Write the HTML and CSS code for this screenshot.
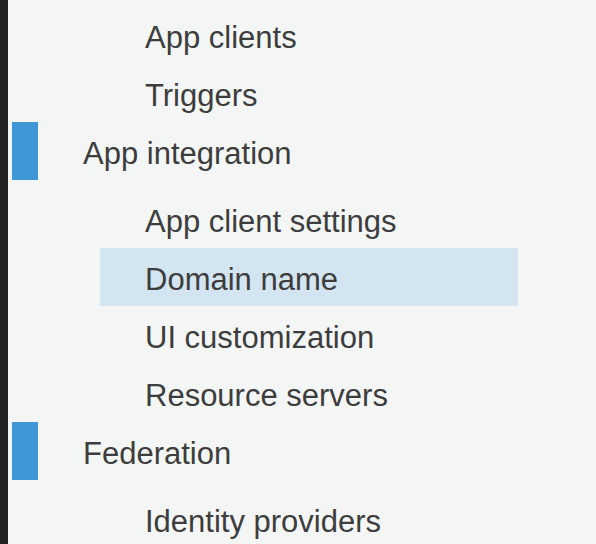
FILE: index.html
```html
<!DOCTYPE html>
<html lang="en">
<head>
  <meta charset="UTF-8">
  <meta name="viewport" content="width=device-width, initial-scale=1.0">
  <title>User pool navigation</title>
  <link rel="stylesheet" href="styles.css">
</head>
<body>
  <div class="edge"></div>
  <nav class="sidenav">
    <a class="item" href="#">App clients</a>
    <a class="item" href="#">Triggers</a>
    <div class="section"><span class="marker"></span><span class="label">App integration</span></div>
    <a class="item" href="#">App client settings</a>
    <a class="item active" href="#">Domain name</a>
    <a class="item" href="#">UI customization</a>
    <a class="item" href="#">Resource servers</a>
    <div class="section"><span class="marker"></span><span class="label">Federation</span></div>
    <a class="item" href="#">Identity providers</a>
  </nav>
</body>
</html>
```

FILE: styles.css
```css
* {
  box-sizing: border-box;
}
body {
  margin: 0;
  height: 544px;
  overflow: hidden;
  display: flex;
  background-color: #f4f6f6;
  font-family: "Liberation Sans", Arial, sans-serif;
  font-size: 31px;
  color: #3d3d3d;
}
.edge {
  width: 8px;
  flex-shrink: 0;
  background-color: #232323;
}
.sidenav {
  flex: 1;
  display: flex;
  flex-direction: column;
  padding-top: 6px;
}
.item {
  display: block;
  height: 58px;
  padding-top: 6px;
  line-height: 52px;
  width: 418px;
  margin-left: 92px;
  padding-left: 45px;
  color: #3d3d3d;
  text-decoration: none;
  white-space: nowrap;
}
.item.active {
  background-color: #d4e5f2;
}
.section {
  display: flex;
  height: 58px;
  margin-bottom: 10px;
  padding-left: 4px;
}
.marker {
  width: 26px;
  height: 58px;
  margin-right: 45px;
  background-color: #3f98d5;
}
.label {
  padding-top: 6px;
  line-height: 52px;
}
```
